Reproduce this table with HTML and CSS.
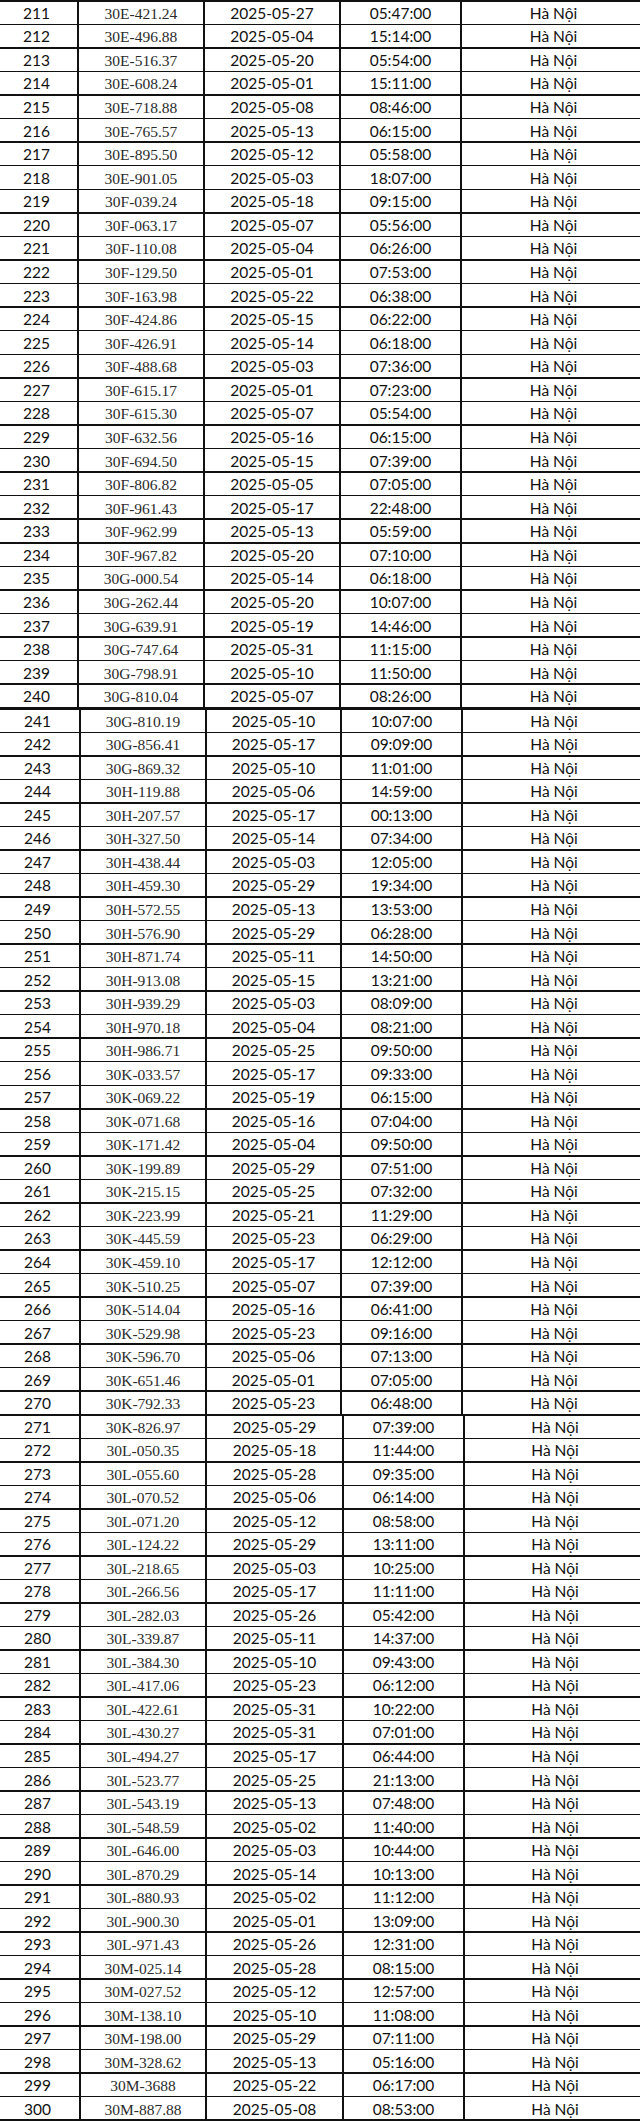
FILE: index.html
```html
<!DOCTYPE html>
<html lang="vi">
<head>
<meta charset="utf-8">
<link rel="stylesheet" href="styles.css">
</head>
<body>
<div class="sheet">
<div class="block b1">
<div class="r"><span>211</span><span class="p">30E-421.24</span><span>2025-05-27</span><span>05:47:00</span><span>Hà Nội</span></div>
<div class="r"><span>212</span><span class="p">30E-496.88</span><span>2025-05-04</span><span>15:14:00</span><span>Hà Nội</span></div>
<div class="r"><span>213</span><span class="p">30E-516.37</span><span>2025-05-20</span><span>05:54:00</span><span>Hà Nội</span></div>
<div class="r"><span>214</span><span class="p">30E-608.24</span><span>2025-05-01</span><span>15:11:00</span><span>Hà Nội</span></div>
<div class="r"><span>215</span><span class="p">30E-718.88</span><span>2025-05-08</span><span>08:46:00</span><span>Hà Nội</span></div>
<div class="r"><span>216</span><span class="p">30E-765.57</span><span>2025-05-13</span><span>06:15:00</span><span>Hà Nội</span></div>
<div class="r"><span>217</span><span class="p">30E-895.50</span><span>2025-05-12</span><span>05:58:00</span><span>Hà Nội</span></div>
<div class="r"><span>218</span><span class="p">30E-901.05</span><span>2025-05-03</span><span>18:07:00</span><span>Hà Nội</span></div>
<div class="r"><span>219</span><span class="p">30F-039.24</span><span>2025-05-18</span><span>09:15:00</span><span>Hà Nội</span></div>
<div class="r"><span>220</span><span class="p">30F-063.17</span><span>2025-05-07</span><span>05:56:00</span><span>Hà Nội</span></div>
<div class="r"><span>221</span><span class="p">30F-110.08</span><span>2025-05-04</span><span>06:26:00</span><span>Hà Nội</span></div>
<div class="r"><span>222</span><span class="p">30F-129.50</span><span>2025-05-01</span><span>07:53:00</span><span>Hà Nội</span></div>
<div class="r"><span>223</span><span class="p">30F-163.98</span><span>2025-05-22</span><span>06:38:00</span><span>Hà Nội</span></div>
<div class="r"><span>224</span><span class="p">30F-424.86</span><span>2025-05-15</span><span>06:22:00</span><span>Hà Nội</span></div>
<div class="r"><span>225</span><span class="p">30F-426.91</span><span>2025-05-14</span><span>06:18:00</span><span>Hà Nội</span></div>
<div class="r"><span>226</span><span class="p">30F-488.68</span><span>2025-05-03</span><span>07:36:00</span><span>Hà Nội</span></div>
<div class="r"><span>227</span><span class="p">30F-615.17</span><span>2025-05-01</span><span>07:23:00</span><span>Hà Nội</span></div>
<div class="r"><span>228</span><span class="p">30F-615.30</span><span>2025-05-07</span><span>05:54:00</span><span>Hà Nội</span></div>
<div class="r"><span>229</span><span class="p">30F-632.56</span><span>2025-05-16</span><span>06:15:00</span><span>Hà Nội</span></div>
<div class="r"><span>230</span><span class="p">30F-694.50</span><span>2025-05-15</span><span>07:39:00</span><span>Hà Nội</span></div>
<div class="r"><span>231</span><span class="p">30F-806.82</span><span>2025-05-05</span><span>07:05:00</span><span>Hà Nội</span></div>
<div class="r"><span>232</span><span class="p">30F-961.43</span><span>2025-05-17</span><span>22:48:00</span><span>Hà Nội</span></div>
<div class="r"><span>233</span><span class="p">30F-962.99</span><span>2025-05-13</span><span>05:59:00</span><span>Hà Nội</span></div>
<div class="r"><span>234</span><span class="p">30F-967.82</span><span>2025-05-20</span><span>07:10:00</span><span>Hà Nội</span></div>
<div class="r"><span>235</span><span class="p">30G-000.54</span><span>2025-05-14</span><span>06:18:00</span><span>Hà Nội</span></div>
<div class="r"><span>236</span><span class="p">30G-262.44</span><span>2025-05-20</span><span>10:07:00</span><span>Hà Nội</span></div>
<div class="r"><span>237</span><span class="p">30G-639.91</span><span>2025-05-19</span><span>14:46:00</span><span>Hà Nội</span></div>
<div class="r"><span>238</span><span class="p">30G-747.64</span><span>2025-05-31</span><span>11:15:00</span><span>Hà Nội</span></div>
<div class="r"><span>239</span><span class="p">30G-798.91</span><span>2025-05-10</span><span>11:50:00</span><span>Hà Nội</span></div>
<div class="r"><span>240</span><span class="p">30G-810.04</span><span>2025-05-07</span><span>08:26:00</span><span>Hà Nội</span></div>
</div>
<div class="block b2">
<div class="r"><span>241</span><span class="p">30G-810.19</span><span>2025-05-10</span><span>10:07:00</span><span>Hà Nội</span></div>
<div class="r"><span>242</span><span class="p">30G-856.41</span><span>2025-05-17</span><span>09:09:00</span><span>Hà Nội</span></div>
<div class="r"><span>243</span><span class="p">30G-869.32</span><span>2025-05-10</span><span>11:01:00</span><span>Hà Nội</span></div>
<div class="r"><span>244</span><span class="p">30H-119.88</span><span>2025-05-06</span><span>14:59:00</span><span>Hà Nội</span></div>
<div class="r"><span>245</span><span class="p">30H-207.57</span><span>2025-05-17</span><span>00:13:00</span><span>Hà Nội</span></div>
<div class="r"><span>246</span><span class="p">30H-327.50</span><span>2025-05-14</span><span>07:34:00</span><span>Hà Nội</span></div>
<div class="r"><span>247</span><span class="p">30H-438.44</span><span>2025-05-03</span><span>12:05:00</span><span>Hà Nội</span></div>
<div class="r"><span>248</span><span class="p">30H-459.30</span><span>2025-05-29</span><span>19:34:00</span><span>Hà Nội</span></div>
<div class="r"><span>249</span><span class="p">30H-572.55</span><span>2025-05-13</span><span>13:53:00</span><span>Hà Nội</span></div>
<div class="r"><span>250</span><span class="p">30H-576.90</span><span>2025-05-29</span><span>06:28:00</span><span>Hà Nội</span></div>
<div class="r"><span>251</span><span class="p">30H-871.74</span><span>2025-05-11</span><span>14:50:00</span><span>Hà Nội</span></div>
<div class="r"><span>252</span><span class="p">30H-913.08</span><span>2025-05-15</span><span>13:21:00</span><span>Hà Nội</span></div>
<div class="r"><span>253</span><span class="p">30H-939.29</span><span>2025-05-03</span><span>08:09:00</span><span>Hà Nội</span></div>
<div class="r"><span>254</span><span class="p">30H-970.18</span><span>2025-05-04</span><span>08:21:00</span><span>Hà Nội</span></div>
<div class="r"><span>255</span><span class="p">30H-986.71</span><span>2025-05-25</span><span>09:50:00</span><span>Hà Nội</span></div>
<div class="r"><span>256</span><span class="p">30K-033.57</span><span>2025-05-17</span><span>09:33:00</span><span>Hà Nội</span></div>
<div class="r"><span>257</span><span class="p">30K-069.22</span><span>2025-05-19</span><span>06:15:00</span><span>Hà Nội</span></div>
<div class="r"><span>258</span><span class="p">30K-071.68</span><span>2025-05-16</span><span>07:04:00</span><span>Hà Nội</span></div>
<div class="r"><span>259</span><span class="p">30K-171.42</span><span>2025-05-04</span><span>09:50:00</span><span>Hà Nội</span></div>
<div class="r"><span>260</span><span class="p">30K-199.89</span><span>2025-05-29</span><span>07:51:00</span><span>Hà Nội</span></div>
<div class="r"><span>261</span><span class="p">30K-215.15</span><span>2025-05-25</span><span>07:32:00</span><span>Hà Nội</span></div>
<div class="r"><span>262</span><span class="p">30K-223.99</span><span>2025-05-21</span><span>11:29:00</span><span>Hà Nội</span></div>
<div class="r"><span>263</span><span class="p">30K-445.59</span><span>2025-05-23</span><span>06:29:00</span><span>Hà Nội</span></div>
<div class="r"><span>264</span><span class="p">30K-459.10</span><span>2025-05-17</span><span>12:12:00</span><span>Hà Nội</span></div>
<div class="r"><span>265</span><span class="p">30K-510.25</span><span>2025-05-07</span><span>07:39:00</span><span>Hà Nội</span></div>
<div class="r"><span>266</span><span class="p">30K-514.04</span><span>2025-05-16</span><span>06:41:00</span><span>Hà Nội</span></div>
<div class="r"><span>267</span><span class="p">30K-529.98</span><span>2025-05-23</span><span>09:16:00</span><span>Hà Nội</span></div>
<div class="r"><span>268</span><span class="p">30K-596.70</span><span>2025-05-06</span><span>07:13:00</span><span>Hà Nội</span></div>
<div class="r"><span>269</span><span class="p">30K-651.46</span><span>2025-05-01</span><span>07:05:00</span><span>Hà Nội</span></div>
<div class="r"><span>270</span><span class="p">30K-792.33</span><span>2025-05-23</span><span>06:48:00</span><span>Hà Nội</span></div>
</div>
<div class="block b3">
<div class="r"><span>271</span><span class="p">30K-826.97</span><span>2025-05-29</span><span>07:39:00</span><span>Hà Nội</span></div>
<div class="r"><span>272</span><span class="p">30L-050.35</span><span>2025-05-18</span><span>11:44:00</span><span>Hà Nội</span></div>
<div class="r"><span>273</span><span class="p">30L-055.60</span><span>2025-05-28</span><span>09:35:00</span><span>Hà Nội</span></div>
<div class="r"><span>274</span><span class="p">30L-070.52</span><span>2025-05-06</span><span>06:14:00</span><span>Hà Nội</span></div>
<div class="r"><span>275</span><span class="p">30L-071.20</span><span>2025-05-12</span><span>08:58:00</span><span>Hà Nội</span></div>
<div class="r"><span>276</span><span class="p">30L-124.22</span><span>2025-05-29</span><span>13:11:00</span><span>Hà Nội</span></div>
<div class="r"><span>277</span><span class="p">30L-218.65</span><span>2025-05-03</span><span>10:25:00</span><span>Hà Nội</span></div>
<div class="r"><span>278</span><span class="p">30L-266.56</span><span>2025-05-17</span><span>11:11:00</span><span>Hà Nội</span></div>
<div class="r"><span>279</span><span class="p">30L-282.03</span><span>2025-05-26</span><span>05:42:00</span><span>Hà Nội</span></div>
<div class="r"><span>280</span><span class="p">30L-339.87</span><span>2025-05-11</span><span>14:37:00</span><span>Hà Nội</span></div>
<div class="r"><span>281</span><span class="p">30L-384.30</span><span>2025-05-10</span><span>09:43:00</span><span>Hà Nội</span></div>
<div class="r"><span>282</span><span class="p">30L-417.06</span><span>2025-05-23</span><span>06:12:00</span><span>Hà Nội</span></div>
<div class="r"><span>283</span><span class="p">30L-422.61</span><span>2025-05-31</span><span>10:22:00</span><span>Hà Nội</span></div>
<div class="r"><span>284</span><span class="p">30L-430.27</span><span>2025-05-31</span><span>07:01:00</span><span>Hà Nội</span></div>
<div class="r"><span>285</span><span class="p">30L-494.27</span><span>2025-05-17</span><span>06:44:00</span><span>Hà Nội</span></div>
<div class="r"><span>286</span><span class="p">30L-523.77</span><span>2025-05-25</span><span>21:13:00</span><span>Hà Nội</span></div>
<div class="r"><span>287</span><span class="p">30L-543.19</span><span>2025-05-13</span><span>07:48:00</span><span>Hà Nội</span></div>
<div class="r"><span>288</span><span class="p">30L-548.59</span><span>2025-05-02</span><span>11:40:00</span><span>Hà Nội</span></div>
<div class="r"><span>289</span><span class="p">30L-646.00</span><span>2025-05-03</span><span>10:44:00</span><span>Hà Nội</span></div>
<div class="r"><span>290</span><span class="p">30L-870.29</span><span>2025-05-14</span><span>10:13:00</span><span>Hà Nội</span></div>
<div class="r"><span>291</span><span class="p">30L-880.93</span><span>2025-05-02</span><span>11:12:00</span><span>Hà Nội</span></div>
<div class="r"><span>292</span><span class="p">30L-900.30</span><span>2025-05-01</span><span>13:09:00</span><span>Hà Nội</span></div>
<div class="r"><span>293</span><span class="p">30L-971.43</span><span>2025-05-26</span><span>12:31:00</span><span>Hà Nội</span></div>
<div class="r"><span>294</span><span class="p">30M-025.14</span><span>2025-05-28</span><span>08:15:00</span><span>Hà Nội</span></div>
<div class="r"><span>295</span><span class="p">30M-027.52</span><span>2025-05-12</span><span>12:57:00</span><span>Hà Nội</span></div>
<div class="r"><span>296</span><span class="p">30M-138.10</span><span>2025-05-10</span><span>11:08:00</span><span>Hà Nội</span></div>
<div class="r"><span>297</span><span class="p">30M-198.00</span><span>2025-05-29</span><span>07:11:00</span><span>Hà Nội</span></div>
<div class="r"><span>298</span><span class="p">30M-328.62</span><span>2025-05-13</span><span>05:16:00</span><span>Hà Nội</span></div>
<div class="r"><span>299</span><span class="p">30M-3688</span><span>2025-05-22</span><span>06:17:00</span><span>Hà Nội</span></div>
<div class="r"><span>300</span><span class="p">30M-887.88</span><span>2025-05-08</span><span>08:53:00</span><span>Hà Nội</span></div>
</div>
</div>
</body>
</html>
```
FILE: styles.css
```css
html, body {
  margin: 0;
  padding: 0;
  background: #fff;
}
body {
  overflow: hidden;
}
.sheet {
  margin-left: -6px;
  width: 653px;
}
.block {
  display: grid;
  box-sizing: border-box;
  height: 707px;
  grid-auto-rows: 1fr;
  row-gap: 1.5px;
  column-gap: 2px;
  padding: 1.5px 2px 0 2px;
  background: #111;
}
.b1 {
  grid-template-columns: 81px 124px 134px 119px 1fr;
}
.b2 {
  padding-top: 2.5px;
  grid-template-columns: 83px 124px 133px 119px 1fr;
}
.b3 {
  padding-bottom: 1.5px;
  grid-template-columns: 83px 124px 135px 119px 1fr;
}
.r {
  display: contents;
}
.block span {
  display: flex;
  align-items: center;
  justify-content: center;
  padding-top: 2px;
  background: #fff;
  color: #111;
  font-family: Lato, "Noto Sans", sans-serif;
  font-size: 15.5px;
  line-height: 1;
}
.block span.p {
  font-family: "Liberation Serif", "Times New Roman", serif;
  color: #2b2b2b;
  font-size: 15.5px;
}
```
